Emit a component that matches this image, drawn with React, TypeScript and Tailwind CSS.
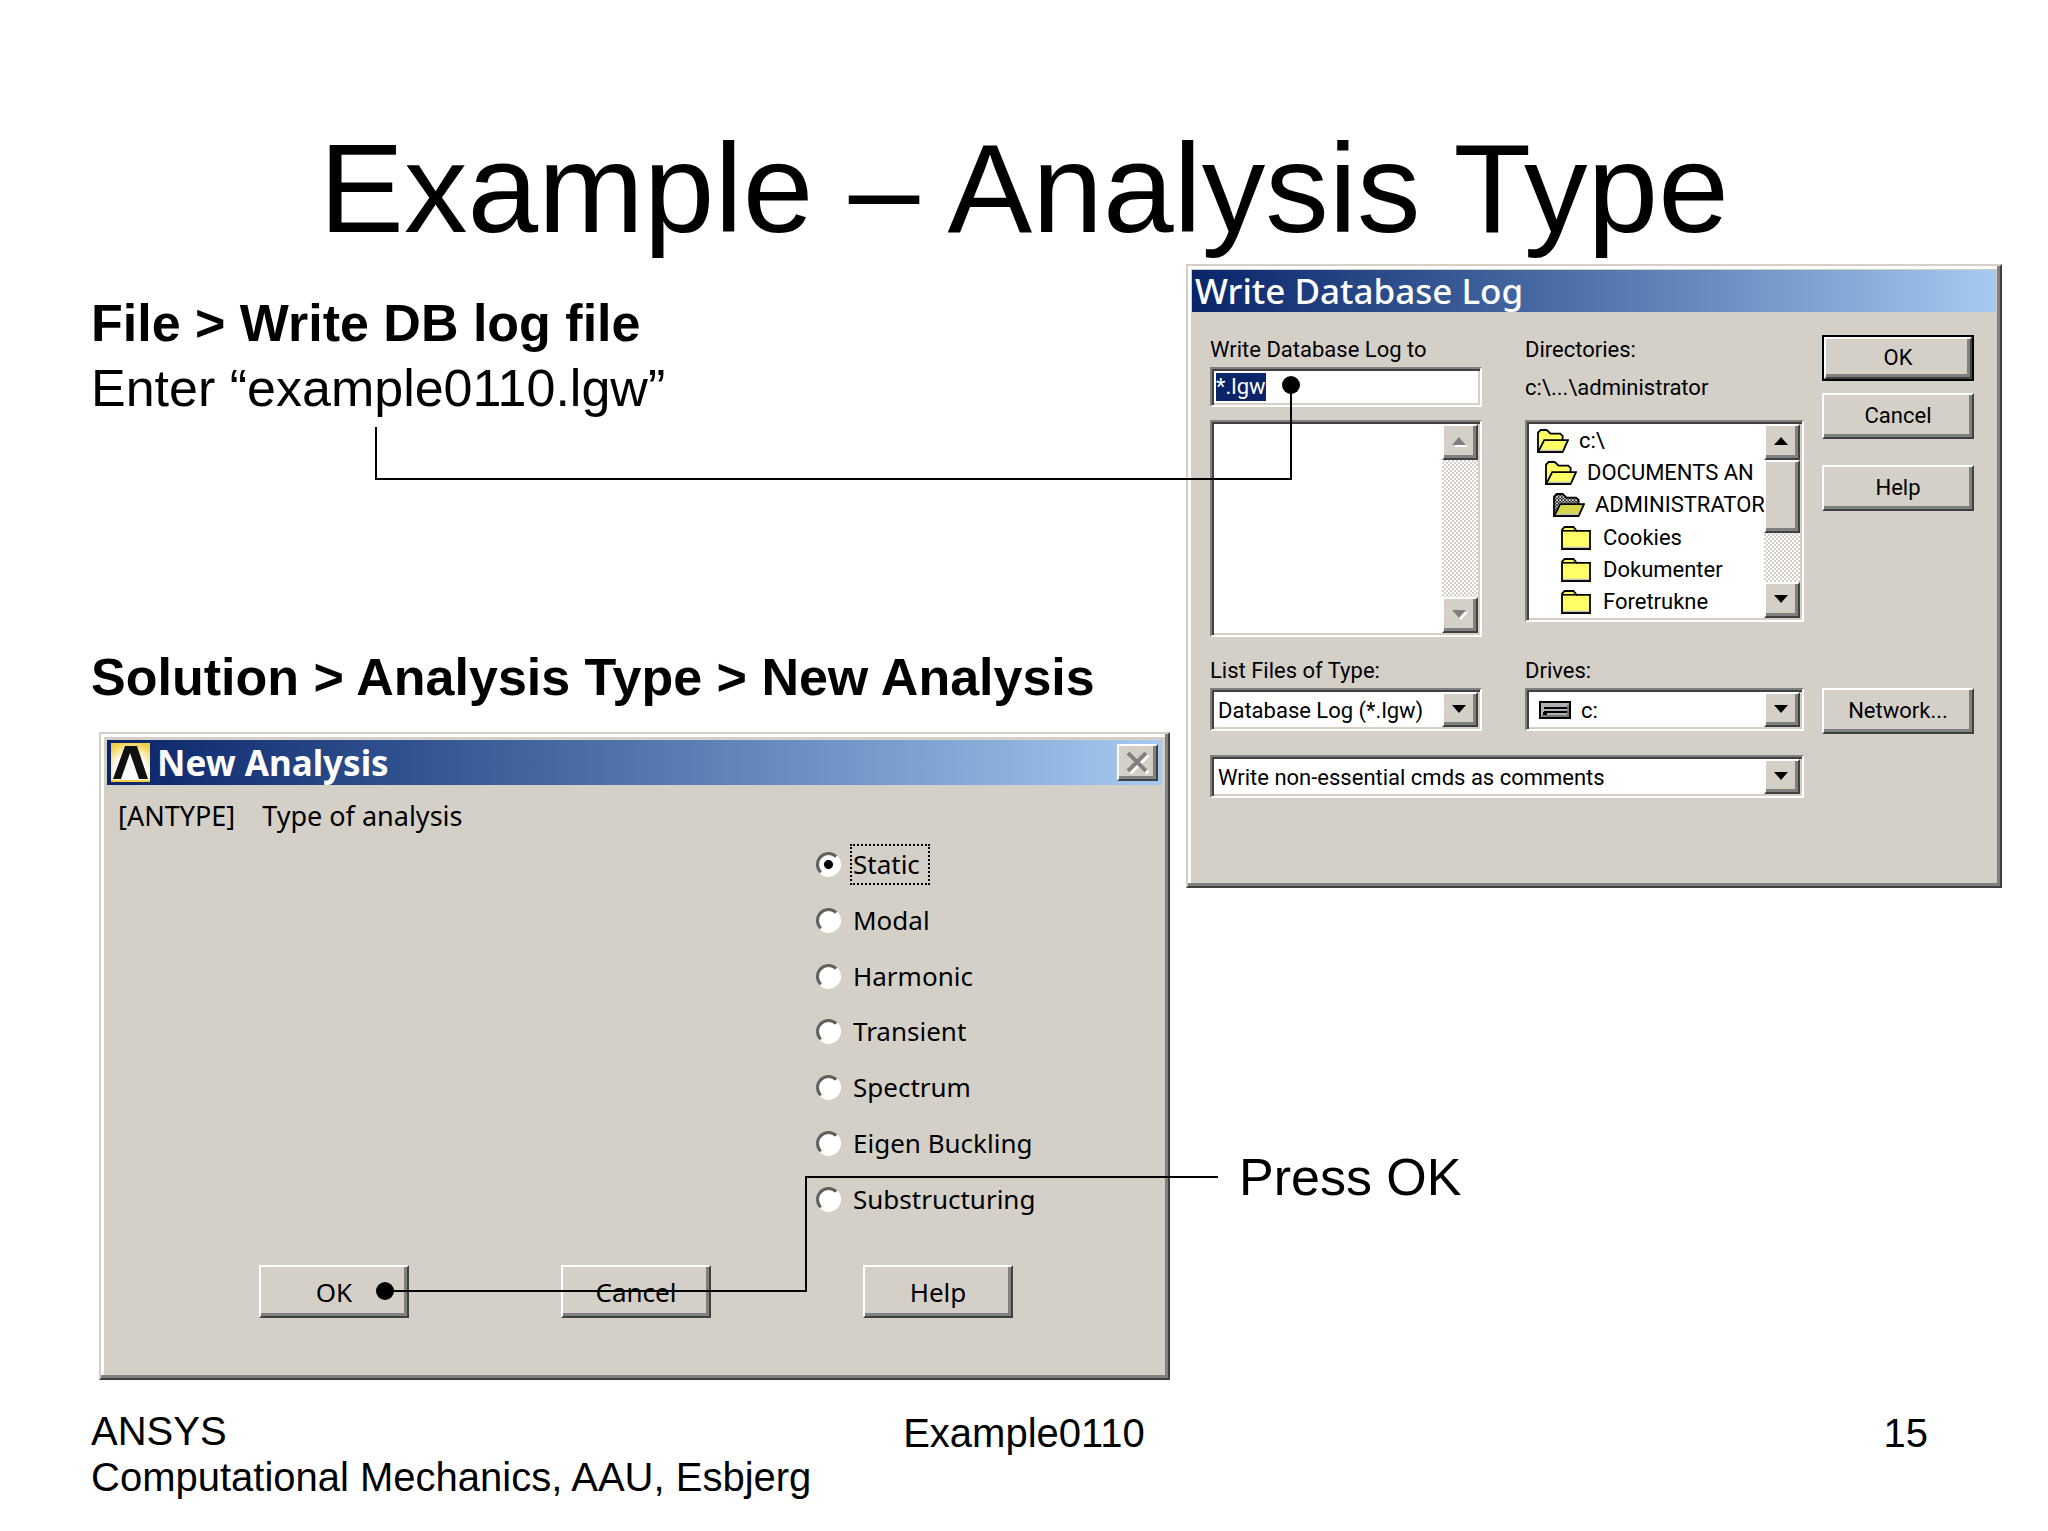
import clsx from "clsx";
import { useId, useState } from "react";

const raised =
  "border-2 border-t-white border-l-white border-r-[#404040] border-b-[#404040] bg-[#d4d0c8] shadow-[inset_-3px_-3px_0_#808080]";
const sunken =
  "border-2 border-t-[#808080] border-l-[#808080] border-r-white border-b-white bg-white p-[2px] shadow-[inset_2px_2px_0_#404040,inset_-2px_-2px_0_#d4d0c8]";
const windowFrame =
  "border-2 border-t-[#d4d0c8] border-l-[#d4d0c8] border-r-[#404040] border-b-[#404040] bg-[#d4d0c8] shadow-[inset_-3px_-3px_0_#808080,inset_3px_3px_0_#fff]";
const track = "bg-[repeating-conic-gradient(#d4d0c8_0_25%,#ffffff_0_50%)] bg-[length:4px_4px]";

const analysisTypes = [
  "Static",
  "Modal",
  "Harmonic",
  "Transient",
  "Spectrum",
  "Eigen Buckling",
  "Substructuring"
];

const directories = [
  { name: "c:\\", icon: "open", indent: "pl-[8px]" },
  { name: "DOCUMENTS AN", icon: "open", indent: "pl-[16px]" },
  { name: "ADMINISTRATOR", icon: "current", indent: "pl-[24px]" },
  { name: "Cookies", icon: "closed", indent: "pl-[32px]" },
  { name: "Dokumenter", icon: "closed", indent: "pl-[32px]" },
  { name: "Foretrukne", icon: "closed", indent: "pl-[32px]" }
];

function FolderIcon({ kind }: { kind: string }) {
  if (kind === "closed") {
    return (
      <svg width="32" height="24" viewBox="0 0 16 12" className="shrink-0" aria-hidden="true">
        <path d="M.5 11.5V1.8L1.8 .5H6.2L7.8 2.4H14.5V11.5Z" fill="#ffff66" stroke="#000" strokeWidth=".9" />
        <path d="M1 2.4H8" stroke="#000" strokeWidth=".8" />
        <path d="M1 10.7H14" stroke="#c0c0c0" strokeWidth=".7" />
      </svg>
    );
  }
  const current = kind === "current";
  return (
    <svg width="32" height="24" viewBox="0 0 16 12" className="shrink-0" aria-hidden="true">
      <defs>
        <pattern id="dither" width="1.6" height="1.6" patternUnits="userSpaceOnUse">
          <rect width="1.6" height="1.6" fill="#222" />
          <rect width=".8" height=".8" fill="#eee" />
          <rect x=".8" y=".8" width=".8" height=".8" fill="#aaa" />
        </pattern>
      </defs>
      <path
        d="M.5 11.5V1.8L1.8 .5H4.8L6.8 2.3H11.5L12.8 3.4V5.5"
        fill={current ? "url(#dither)" : "#ffff66"}
        stroke="#000"
        strokeWidth=".9"
      />
      <path
        d="M.6 11.5L3.6 5.6H15.5L12.8 11.5Z"
        fill={current ? "#d6d64a" : "#ffff66"}
        stroke="#000"
        strokeWidth=".9"
      />
      <path d="M1.8 10.7H12.6" stroke="#c0c0c0" strokeWidth=".7" />
    </svg>
  );
}

function DriveIcon() {
  return (
    <svg width="32" height="18" viewBox="0 0 32 18" className="shrink-0" aria-hidden="true">
      <rect x="1" y="1" width="30" height="16" fill="#b0b0b4" stroke="#000" strokeWidth="2" />
      <path d="M3 15H29V4" fill="none" stroke="#77777b" strokeWidth="2" />
      <path d="M5 7H28M5 11H28" stroke="#000" strokeWidth="2" />
      <rect x="4" y="11" width="4" height="3" fill="#000" />
    </svg>
  );
}

function Arrow({ up, disabled }: { up?: boolean; disabled?: boolean }) {
  const points = up ? "0,8 7,0 14,8" : "0,0 14,0 7,8";
  return (
    <svg width="16" height="10" viewBox="0 0 16 10" aria-hidden="true">
      {disabled && <polygon points={points} fill="#fff" transform="translate(2 2)" />}
      <polygon points={points} fill={disabled ? "#808080" : "#000"} />
    </svg>
  );
}

function ScrollButton({ up, disabled, label }: { up?: boolean; disabled?: boolean; label: string }) {
  return (
    <button
      type="button"
      aria-label={label}
      disabled={disabled}
      className={clsx(raised, "flex h-[36px] w-[36px] shrink-0 items-center justify-center")}
    >
      <Arrow up={up} disabled={disabled} />
    </button>
  );
}

function DropDown({
  id,
  label,
  option,
  icon
}: {
  id?: string;
  label?: string;
  option: string;
  icon?: React.ReactNode;
}) {
  return (
    <div className={clsx(sunken, "flex h-[43px] items-stretch")}>
      {icon && <span className="flex items-center pl-[10px]">{icon}</span>}
      <select
        id={id}
        aria-label={label}
        className={clsx("min-w-0 flex-1 appearance-none pt-px outline-none", icon ? "pl-[10px]" : "pl-[4px]")}
      >
        <option>{option}</option>
      </select>
      <span className={clsx(raised, "flex w-[36px] shrink-0 items-center justify-center")} aria-hidden="true">
        <Arrow />
      </span>
    </div>
  );
}

function WriteDatabaseLog() {
  const fileId = useId();
  const typeId = useId();
  const driveId = useId();
  const button = clsx(raised, "flex h-[46px] w-full items-center justify-center");

  return (
    <section aria-label="Write Database Log" className={clsx(windowFrame, "p-[4px] pb-[88px]")}>
      <h2 className="flex h-[42px] items-center bg-linear-to-r from-[#0a246a] to-[#a6caf0] px-[3px] font-['Noto_Sans',sans-serif] text-[35px] leading-[42px] font-medium text-white">
        Write Database Log
      </h2>

      <div className="grid grid-cols-[minmax(0,297fr)_minmax(0,279fr)_minmax(0,152fr)] gap-x-[18px] pt-[20px] pr-[22px] pl-[18px] font-[Roboto,sans-serif] text-[22px] leading-[36px]">
        <div className="pr-[25px]">
          <label htmlFor={fileId} className="block h-[35px]">
            Write Database Log to
          </label>
          <div className={clsx(sunken, "flex h-[40px] items-center pl-[4px]")}>
            <input
              id={fileId}
              defaultValue="*.lgw"
              className="h-[28px] w-[50px] bg-[#0a246a] text-white outline-none"
            />
          </div>
          <div className={clsx(sunken, "mt-[13px] flex h-[217px] justify-end")} role="listbox" aria-label="Files">
            <div className={clsx(track, "flex flex-col justify-between")}>
              <ScrollButton up disabled label="Scroll files up" />
              <ScrollButton disabled label="Scroll files down" />
            </div>
          </div>
        </div>

        <div>
          <div className="h-[35px]">Directories:</div>
          <div className="h-[40px] leading-[42px]">c:\...\administrator</div>
          <div className={clsx(sunken, "mt-[13px] flex h-[202px]")}>
            <ul className="flex min-w-0 flex-1 flex-col justify-between overflow-hidden pt-px">
              {directories.map(({ name, icon, indent }) => (
                <li key={name} className={clsx(indent, "flex h-[32px] items-center gap-[10px] whitespace-nowrap")}>
                  <FolderIcon kind={icon} />
                  {name}
                </li>
              ))}
            </ul>
            <div className={clsx(track, "flex flex-col justify-between")}>
              <div>
                <ScrollButton up label="Scroll directories up" />
                <div className={clsx(raised, "h-[73px]")} />
              </div>
              <ScrollButton label="Scroll directories down" />
            </div>
          </div>
        </div>

        <div className="pt-[3px]">
          <div className="border-2 border-black">
            <button type="button" className={clsx(raised, "flex h-[42px] w-full items-center justify-center")}>
              OK
            </button>
          </div>
          <button type="button" className={clsx(button, "mt-[12px]")}>
            Cancel
          </button>
          <button type="button" className={clsx(button, "mt-[26px]")}>
            Help
          </button>
        </div>

        <div className="pt-[16px] pr-[25px]">
          <label htmlFor={typeId} className="block h-[35px]">
            List Files of Type:
          </label>
          <DropDown id={typeId} option="Database Log (*.lgw)" />
        </div>
        <div className="pt-[16px]">
          <label htmlFor={driveId} className="block h-[35px]">
            Drives:
          </label>
          <DropDown id={driveId} option="c:" icon={<DriveIcon />} />
        </div>
        <div className="pt-[51px]">
          <button type="button" className={button}>
            Network...
          </button>
        </div>

        <div className="col-span-2 pt-[21px]">
          <DropDown label="Non-essential commands" option="Write non-essential cmds as comments" />
        </div>
      </div>
    </section>
  );
}

function NewAnalysis() {
  const [selected, setSelected] = useState("Static");
  const button = clsx(raised, "h-[53px] w-[150px]");

  return (
    <section
      aria-label="New Analysis"
      className={clsx(windowFrame, "p-[6px] font-['Noto_Sans',sans-serif] text-[26px] leading-[36px]")}
    >
      <div className="flex h-[45px] items-center bg-linear-to-r from-[#0a246a] to-[#a6caf0] px-[4px]">
        <svg width="39" height="39" viewBox="0 0 39 39" aria-hidden="true">
          <defs>
            <radialGradient id="glow" cx=".5" cy=".7" r=".75">
              <stop offset=".5" stopColor="#fff" />
              <stop offset="1" stopColor="#f3cf45" />
            </radialGradient>
          </defs>
          <rect width="39" height="39" fill="url(#glow)" />
          <path d="M2 36L14 3H26L37 36H28L19 10L10 36Z" fill="#111" />
          <path d="M0 38H39" stroke="#f3cf45" strokeWidth="2" />
        </svg>
        <h2 className="flex-1 pl-[7px] text-[35px] leading-[44px] font-bold text-white">New Analysis</h2>
        <button
          type="button"
          aria-label="Close"
          className={clsx(raised, "flex h-[37px] w-[41px] items-center justify-center")}
        >
          <svg width="24" height="24" viewBox="0 0 24 24" aria-hidden="true">
            <path d="M4 4L22 22M22 4L4 22" stroke="#fff" strokeWidth="4" />
            <path d="M2 2L20 20M20 2L2 20" stroke="#808080" strokeWidth="4" />
          </svg>
        </button>
      </div>

      <p className="flex gap-[27px] pt-[13px] pl-[11px] text-[27px]">
        <span>[ANTYPE]</span>
        <span>Type of analysis</span>
      </p>

      <fieldset
        aria-label="Type of analysis"
        className="flex h-[390px] flex-col justify-between pt-[10px] pb-[4px] pl-[709px]"
      >
        {analysisTypes.map((type) => (
          <label key={type} className="flex h-[41px] w-fit items-center gap-[9px]">
            <input
              type="radio"
              name="analysis"
              value={type}
              checked={selected === type}
              onChange={() => setSelected(type)}
              className="h-[25px] w-[25px] appearance-none rounded-full border-3 border-t-[#606060] border-r-white border-b-white border-l-[#606060] bg-white checked:bg-[radial-gradient(circle,#000_4px,#fff_5px)]"
            />
            <span
              className={clsx(
                "border-2 px-px leading-[37px]",
                selected === type ? "border-dotted border-black pr-[8px]" : "border-transparent"
              )}
            >
              {type}
            </span>
          </label>
        ))}
      </fieldset>

      <div className="flex gap-[152px] pt-[41px] pb-[54px] pl-[152px]">
        <button type="button" className={button}>
          OK
        </button>
        <button type="button" className={button}>
          Cancel
        </button>
        <button type="button" className={button}>
          Help
        </button>
      </div>
    </section>
  );
}

function Connectors() {
  return (
    <svg
      className="pointer-events-none absolute inset-0 h-full w-full"
      viewBox="0 0 2048 1531"
      preserveAspectRatio="none"
      aria-hidden="true"
    >
      <path d="M376 427V479H1291V385" fill="none" stroke="#000" strokeWidth="2" />
      <circle cx="1291" cy="385" r="9" />
      <path d="M1218 1177H806V1291H385" fill="none" stroke="#000" strokeWidth="2" />
      <circle cx="385" cy="1291" r="9" />
    </svg>
  );
}

export default function App() {
  return (
    <div className="relative bg-white pt-[126px] pb-[31px] font-['Liberation_Sans',Arial,sans-serif] text-black">
      <h1 className="text-center text-[127px] leading-[125px]">Example – Analysis Type</h1>

      <main className="mt-[13px] grid grid-cols-[minmax(0,1095fr)_minmax(0,816fr)] pr-[46px] pl-[91px] text-[52px] leading-[65px]">
        <div className="pt-[27px]">
          <p className="font-bold">File &gt; Write DB log file</p>
          <p>Enter “example0110.lgw”</p>
          <p className="mt-[224px] font-bold">Solution &gt; Analysis Type &gt; New Analysis</p>
          <div className="mt-[22px] mr-[16px] ml-[8px]">
            <NewAnalysis />
          </div>
        </div>
        <div>
          <WriteDatabaseLog />
          <p className="mt-[257px] pl-[53px]">Press OK</p>
        </div>
      </main>

      <footer className="mt-[28px] grid grid-cols-[1fr_auto_1fr] px-[91px] text-[40px] leading-[46px]">
        <p>
          ANSYS
          <br />
          Computational Mechanics, AAU, Esbjerg
        </p>
        <p className="pt-[2px]">Example0110</p>
        <p className="pt-[2px] pr-[29px] text-right">15</p>
      </footer>

      <Connectors />
    </div>
  );
}
